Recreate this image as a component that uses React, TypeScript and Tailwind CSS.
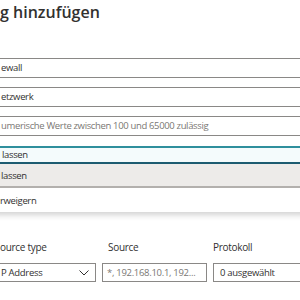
import React from "react";

export default function App() {
  return (
    <div
      className="w-[300px] h-[300px] overflow-hidden bg-white text-[#323130]"
      style={{ fontFamily: '"Open Sans", "Noto Sans", sans-serif' }}
    >
      <div className="h-[58px] text-[16px] font-semibold leading-[24px] whitespace-nowrap">
        g hinzufügen
      </div>

      <div className="flex flex-col gap-[9px] -ml-[10px] w-[330px] text-[9.5px] tracking-[-0.35px]">
        <div className="h-[20px] border border-[#8a8886] pl-[10px] leading-[18px] whitespace-nowrap">ewall</div>
        <div className="h-[20px] border border-[#8a8886] pl-[10px] leading-[18px] whitespace-nowrap">etzwerk</div>
        <div className="h-[20px] border border-[#8a8886] pl-[10px] leading-[18px] text-[#7a7774] whitespace-nowrap">
          umerische Werte zwischen 100 und 65000 zulässig
        </div>
        <div className="relative mt-[1px]">
          <div className="h-[18px] border-y-2 border-t-[#2f8f9d] border-b-[#1d5e73] border-x border-x-[#2f8f9d] bg-[#f4fbfc] pl-[11px] leading-[14px] whitespace-nowrap">
            lassen
          </div>
          <div className="absolute left-0 right-0 top-[18px] bg-white shadow-[0_3px_6px_rgba(0,0,0,0.18)] z-10">
            <div className="h-[24px] bg-[#edebe9] border-b-2 border-[#b3b0ad] pl-[11px] leading-[23px] whitespace-nowrap">lassen</div>
            <div className="h-[24px] pl-[10px] leading-[25px] whitespace-nowrap">rweigern</div>
          </div>
        </div>
      </div>

      <div className="mt-[74px] flex gap-[6px] -ml-[40px] w-[380px] text-[9.5px] tracking-[-0.3px]">
        <div className="w-[136px] flex flex-col">
          <div className="h-[18px] pl-[40px] font-medium leading-[18px] whitespace-nowrap text-[10px]">ource type</div>
          <div className="mt-[7px] h-[19px] border border-[#8a8886] pl-[40px] pr-[6px] flex items-center justify-between">
            <span className="whitespace-nowrap leading-[17px]">P Address</span>
            <svg width="10" height="6" viewBox="0 0 10 6">
              <path d="M0.5 0.5 L5 5 L9.5 0.5" fill="none" stroke="#323130" strokeWidth="1" />
            </svg>
          </div>
        </div>
        <div className="w-[105px] flex flex-col">
          <div className="h-[18px] pl-[6px] font-medium leading-[18px] whitespace-nowrap text-[10px]">Source</div>
          <div className="mt-[7px] h-[19px] border border-[#8a8886] pl-[4px] text-[#7a7774] leading-[17px] whitespace-nowrap overflow-hidden">
            *, 192.168.10.1, 192...
          </div>
        </div>
        <div className="w-[120px] flex flex-col">
          <div className="h-[18px] font-medium leading-[18px] whitespace-nowrap text-[10px]">Protokoll</div>
          <div className="mt-[7px] h-[19px] border border-[#8a8886] pl-[6px] leading-[17px] whitespace-nowrap">
            0 ausgewählt
          </div>
        </div>
      </div>
    </div>
  );
}
